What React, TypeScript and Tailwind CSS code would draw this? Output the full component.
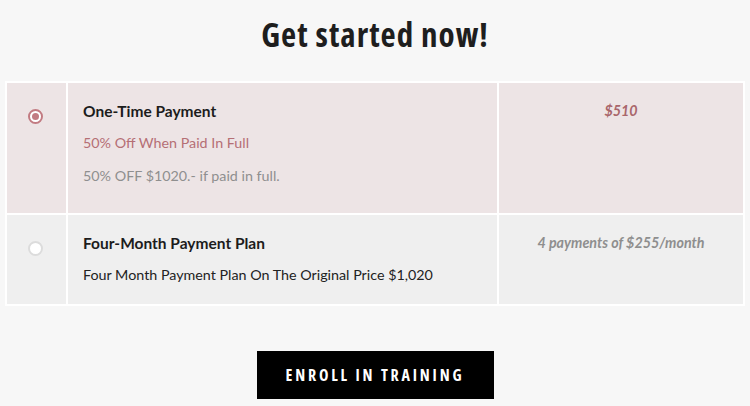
import { useState } from "react";

const plans = [
  {
    id: "full",
    title: "One-Time Payment",
    subtitle: "50% Off When Paid In Full",
    note: "50% OFF $1020.- if paid in full.",
    price: "$510",
  },
  {
    id: "monthly",
    title: "Four-Month Payment Plan",
    subtitle: "Four Month Payment Plan On The Original Price $1,020",
    price: "4 payments of $255/month",
  },
];

export default function App() {
  const [selected, setSelected] = useState("full");

  return (
    <main className="min-h-[406px] bg-[#f7f7f7] font-['Lato','Noto_Sans',sans-serif] text-[#222]">
      <h1 className="pt-[14px] text-center font-['Open_Sans',sans-serif] text-[33px] font-bold font-stretch-[80%] tracking-[1px] leading-[42px] text-[#1e1e1e]">
        Get started now!
      </h1>

      <table className="mx-[5px] mt-[25px] w-[740px] table-fixed border-collapse">
        <colgroup>
          <col className="w-[61px]" />
          <col className="w-[431px]" />
          <col />
        </colgroup>
        <tbody>
          {plans.map((plan) => {
            const active = selected === plan.id;
            return (
              <tr
                key={plan.id}
                onClick={() => setSelected(plan.id)}
                className={`cursor-pointer align-top ${active ? "h-[132px] bg-[#ede4e5]" : "h-[91px] bg-[#efefef]"}`}
              >
                <td className="border-2 border-white pt-[26px] pr-[3px]">
                  {/* radio */}
                  <div className="flex justify-center">
                    <span
                      className={`flex h-[15px] w-[15px] items-center justify-center rounded-full border-2 bg-white ${
                        active ? "border-[#c27b82]" : "border-[#dcdcdc]"
                      }`}
                    >
                      {active && <span className="h-[7px] w-[7px] rounded-full bg-[#c27b82]" />}
                    </span>
                  </div>
                </td>
                <td className="border-2 border-white pl-[15px] pt-[17px]">
                  <div className="text-[15.5px] font-bold leading-[22px] text-[#1c1c1c]">{plan.title}</div>
                  <div
                    className={`mt-[10px] text-[14.3px] leading-[22px] ${active ? "text-[#b56f75]" : "text-[#222]"}`}
                  >
                    {plan.subtitle}
                  </div>
                  {plan.note && (
                    <div className="mt-[11px] text-[14.3px] leading-[22px] text-[#8f8f8f]">{plan.note}</div>
                  )}
                </td>
                <td
                  className={`border-2 border-white pt-[17px] text-center text-[14.3px] font-bold italic leading-[22px] ${
                    active ? "text-[#a9666b]" : "text-[#8e8e8e]"
                  }`}
                >
                  {plan.price}
                </td>
              </tr>
            );
          })}
        </tbody>
      </table>

      <div className="mt-[45px] flex justify-center">
        <button className="h-[48px] w-[237px] bg-black font-['Open_Sans',sans-serif] text-[16px] font-bold font-stretch-[75%] tracking-[2.8px] text-white">
          ENROLL IN TRAINING
        </button>
      </div>
    </main>
  );
}
